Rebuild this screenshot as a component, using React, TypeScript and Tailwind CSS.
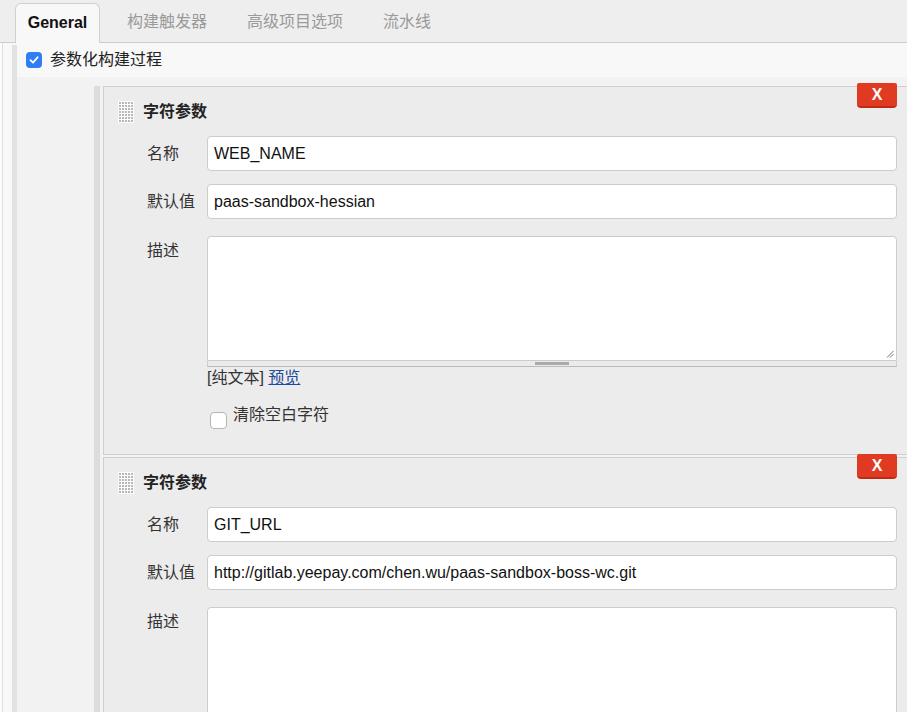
import React from "react";

const Grip = () => {
  const dots: React.ReactElement[] = [];
  for (let r = 0; r < 7; r++) {
    for (let c = 0; c < 5; c++) {
      dots.push(<rect key={`${r}-${c}`} x={1 + c * 3} y={1 + r * 3} width="2" height="2" fill="#b8b8b8" />);
    }
  }
  return (
    <svg width="16" height="22" viewBox="0 0 16 22" className="shrink-0">
      <rect width="16" height="22" fill="#fbfbfb" />
      {dots}
    </svg>
  );
};

function Field({ label, value, className = "" }: { label: string; value: string; className?: string }) {
  return (
    <div className={`flex items-center ${className}`}>
      <div className="w-[60px] shrink-0 text-[16px] leading-[18px] text-[#333333]">{label}</div>
      <div className="flex-1 h-[35px] bg-white border border-[#cccccc] rounded-[4px] flex items-center pl-[6px] text-[16px] text-[#111111] whitespace-nowrap overflow-hidden">
        {value}
      </div>
    </div>
  );
}

function Panel({
  name,
  value,
  footer = true,
  className = "",
}: {
  name: string;
  value: string;
  footer?: boolean;
  className?: string;
}) {
  return (
    <div className={`relative bg-[#ececec] border-y border-l border-[#cfcfcf] pt-[14px] pr-[10px] pb-[25px] ${className}`}>
      <div className="absolute -top-[4px] right-[10px] w-[40px] h-[25px] bg-[#e03a22] border-b-2 border-[#c02a15] rounded-b-[4px] rounded-t-[2px] flex items-center justify-center text-white font-bold text-[16px]">
        X
      </div>
      <div className="flex items-center h-[22px] pl-[14px]">
        <Grip />
        <span className="ml-[9px] font-bold text-[16px] text-[#222222]">字符参数</span>
      </div>
      <div className="pl-[43px] mt-[13px] flex flex-col">
        <Field label="名称" value={name} />
        <Field label="默认值" value={value} className="mt-[13px]" />
        <div className="flex mt-[17px]">
          <div className="w-[60px] shrink-0 pt-[6px] text-[16px] leading-[18px] text-[#333333]">描述</div>
          <div className="flex-1">
            <div className="relative h-[125px] bg-white border border-[#cccccc] rounded-t-[4px]">
              <svg width="8" height="8" viewBox="0 0 8 8" className="absolute right-[2px] bottom-[2px]">
                <line x1="1" y1="7.5" x2="7.5" y2="1" stroke="#777" strokeWidth="1" />
                <line x1="4" y1="7.5" x2="7.5" y2="4" stroke="#777" strokeWidth="1" />
              </svg>
            </div>
            {footer && (
              <>
                <div className="h-[6px] bg-[#ebebeb] border-x border-b border-x-[#cccccc] border-b-[#b8bdb8] flex justify-center items-start pt-[1px]">
                  <div className="w-[34px] h-[3px] bg-[#a9a9a9]" />
                </div>
                <div className="mt-[2px] text-[16px] leading-[18px] text-[#333333]">
                  [纯文本] <span className="text-[#204a9c] underline">预览</span>
                </div>
                <div className="flex items-start mt-[19px]">
                  <div className="mt-[6px] ml-[3px] w-[17px] h-[17px] bg-white border border-[#b5b5b5] rounded-[4px] shrink-0" />
                  <span className="ml-[6px] text-[16px] leading-[18px] text-[#333333]">清除空白字符</span>
                </div>
              </>
            )}
          </div>
        </div>
      </div>
    </div>
  );
}

export default function App() {
  return (
    <div className="w-[907px] h-[712px] overflow-hidden bg-[#f8f8f8] flex flex-col font-['Liberation_Sans','Noto_Sans_CJK_SC',sans-serif]">
      <div className="h-[43px] shrink-0 bg-[#eeeeee] border-b border-[#cccccc] flex items-end pl-[15px]">
        <div className="w-[85px] h-[40px] -mb-px bg-[#f8f8f8] border border-b-0 border-[#d0d0d0] rounded-t-[6px] flex items-center justify-center pb-[2px] text-[16px] font-bold text-[#111111]">
          General
        </div>
        <div className="flex items-center h-[40px] ml-[27px] gap-[40px] text-[16px] text-[#9a9a9a]">
          <span>构建触发器</span>
          <span>高级项目选项</span>
          <span>流水线</span>
        </div>
      </div>
      <div className="flex-1 flex min-h-0">
        <div className="w-[2px] bg-[#fcfcfc]" />
        <div className="w-[1px] bg-[#dddddd]" />
        <div className="w-[9px]" />
        <div className="w-[5px] bg-[#e2e2e2] mt-[2px]" />
        <div className="flex-1 flex flex-col min-w-0">
          <div className="h-[34px] shrink-0 flex items-center pl-[9px]">
            <div className="w-[16px] h-[16px] rounded-[4px] bg-[#2f7ef6] flex items-center justify-center">
              <svg width="12" height="12" viewBox="0 0 12 12">
                <path d="M2.5 6.2 L5 8.7 L9.6 3.3" stroke="white" strokeWidth="1.8" fill="none" strokeLinecap="round" strokeLinejoin="round" />
              </svg>
            </div>
            <span className="ml-[8px] text-[16px] text-[#222222]">参数化构建过程</span>
          </div>
          <div className="flex-1 bg-[#f2f2f2] flex pt-[9px] pl-[77px] min-h-0">
            <div className="w-[6px] bg-[#dcdcdc]" />
            <div className="w-[3px]" />
            <div className="flex-1 flex flex-col min-w-0">
              <Panel name="WEB_NAME" value="paas-sandbox-hessian" />
              <Panel
                name="GIT_URL"
                value="http://gitlab.yeepay.com/chen.wu/paas-sandbox-boss-wc.git"
                footer={false}
                className="mt-[2px]"
              />
            </div>
          </div>
        </div>
      </div>
    </div>
  );
}
